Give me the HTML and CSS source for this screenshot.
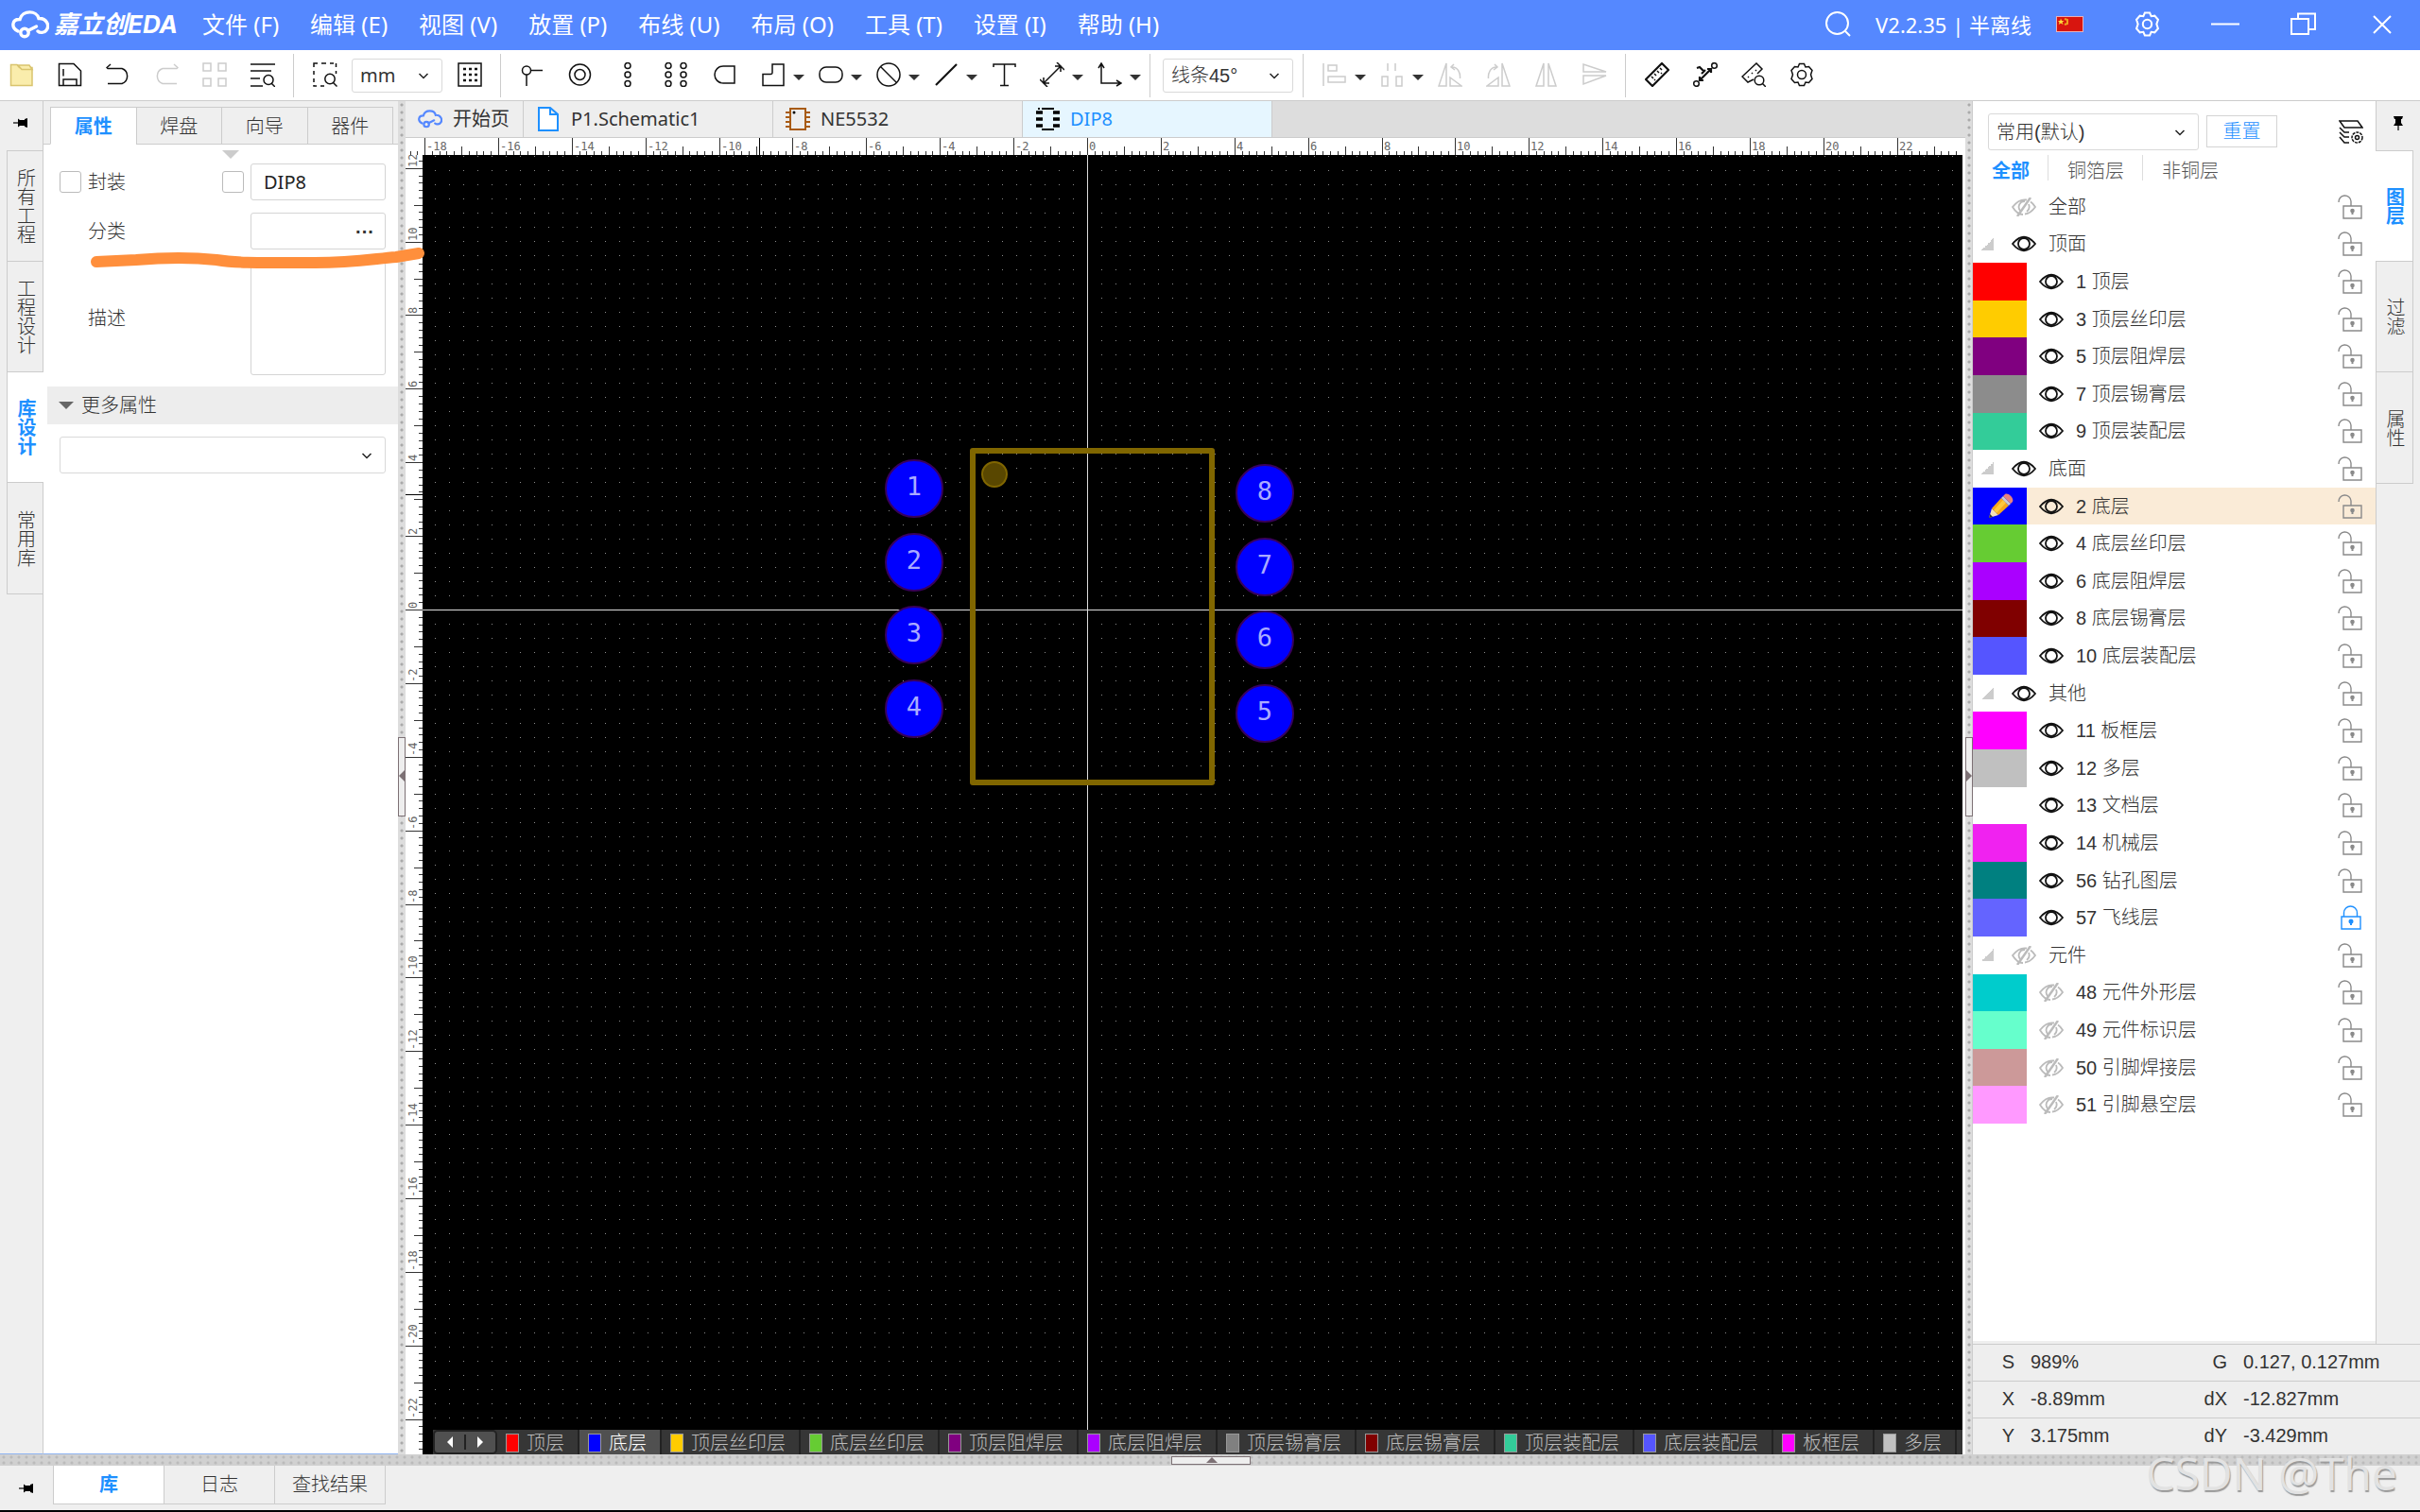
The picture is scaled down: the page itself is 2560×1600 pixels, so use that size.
FILE: index.html
```html
<!DOCTYPE html>
<html lang="zh-CN">
<head>
<meta charset="utf-8">
<title>嘉立创EDA - DIP8</title>
<link rel="stylesheet" href="styles.css">
</head>
<body>
<svg class="defs" width="0" height="0" aria-hidden="true">
  <defs>
    <symbol id="cloud" viewBox="0 0 40 30"><g fill="none" stroke="currentColor" stroke-width="3.4" stroke-linecap="round"><path d="M7 22C-1 18 1 9 9 9.500C12-1 27 0 29 8.500C37 8 41 16 37 21C35 24 30 24 28 22"/><circle cx="14" cy="23.500" r="4.200"/><path d="M17.500 21.500L26.500 17"/></g></symbol>
    <symbol id="chev" viewBox="0 0 12 12"><path d="M1.500 4L6 8.500L10.500 4" fill="none" stroke="#222" stroke-width="1.500"/></symbol>
    <symbol id="pin" viewBox="0 0 16 12"><path d="M0 6H6" stroke="#000" stroke-width="1.200"/><path d="M5 1.500L7 3H12V2L15 1V11L12 10V9H7L5 10.500Z" fill="#000"/></symbol>
    <symbol id="folder" viewBox="0 0 26 26"><path d="M1.500 2.500H8L10.500 5.500H24V24.500H1.500Z" fill="#faedac" stroke="#d9c46e" stroke-width="1.500"/><path d="M9 3H21L24 7.500H13Z" fill="#faedac" stroke="#d9c46e"/></symbol>
    <symbol id="save" viewBox="0 0 26 26"><path d="M1.500 1.500H17L24.500 9V24.500H1.500ZM6 24V18H20V24M6 7V14.500"/></symbol>
    <symbol id="undo" viewBox="0 0 26 26"><path d="M5 2L1 5.500L2 6.500H17A8.500 8.500 0 0 1 17 22.500H2"/></symbol>
    <symbol id="redo" viewBox="0 0 26 26"><path d="M21 2L25 5.500L24 6.500H9A8.500 8.500 0 0 0 9 22.500H24"/></symbol>
    <symbol id="tiles" viewBox="0 0 26 26"><path d="M1 1H9V9H1ZM17 1H25V9H17ZM1 17H9V25H1ZM17 17H25V25H17Z"/></symbol>
    <symbol id="listfind" viewBox="0 0 26 26"><path d="M0 2H26M0 9H22M0 17H10M0 25H13M22 22L26 26"/><circle cx="19" cy="18.500" r="5"/></symbol>
    <symbol id="areafind" viewBox="0 0 26 26"><path d="M1 5V1H5M9 1H14M18 1H22M24.500 1V5M24.500 9V12M1 9V13M1 17V21M1 24V25H4M8 25H12M21.500 21.500L25.500 25.500"/><circle cx="18" cy="17.500" r="5.200"/></symbol>
    <symbol id="grid" viewBox="0 0 26 26"><path d="M1 1H25V25H1Z"/><path d="M6 7H21M6 13H21M6 19H21" stroke-dasharray="3 3" stroke-width="2.500"/></symbol>
    <symbol id="pinicon" viewBox="0 0 26 26"><circle cx="7" cy="8.500" r="4.500"/><path d="M7 13V25M11.500 8.500H24"/></symbol>
    <symbol id="ring" viewBox="0 0 26 26"><circle cx="12.500" cy="13" r="11"/><circle cx="12.500" cy="13" r="5.500"/></symbol>
    <symbol id="three" viewBox="0 0 26 26"><circle cx="12" cy="3.500" r="3"/><circle cx="12" cy="13" r="3"/><circle cx="12" cy="22.500" r="3"/></symbol>
    <symbol id="six" viewBox="0 0 26 26"><circle cx="4" cy="3.500" r="3"/><circle cx="4" cy="13" r="3"/><circle cx="4" cy="22.500" r="3"/><circle cx="20" cy="3.500" r="3"/><circle cx="20" cy="13" r="3"/><circle cx="20" cy="22.500" r="3"/></symbol>
    <symbol id="dshape" viewBox="0 0 26 26"><path d="M11 4H23V22H11C6 22 2 18 2 13S6 4 11 4Z"/></symbol>
    <symbol id="lshape" viewBox="0 0 26 26"><path d="M12 2H24V24.500H2V12.500H10C12 12.500 12 12 12 10.500Z"/></symbol>
    <symbol id="oval" viewBox="0 0 26 26"><rect x="1" y="5" width="24" height="16" rx="7"/></symbol>
    <symbol id="slash" viewBox="0 0 26 26"><circle cx="13" cy="13" r="12"/><path d="M4.500 4.500L21.500 21.500"/></symbol>
    <symbol id="line" viewBox="0 0 26 26"><path d="M2 24L24 2" stroke-width="2.200"/></symbol>
    <symbol id="text" viewBox="0 0 26 26"><path d="M2 5V2H25V5M13.500 2V24.500M9 24.500H18"/></symbol>
    <symbol id="dim" viewBox="0 0 26 26"><path d="M4 22L22 4M0 18L8 26M18 0L26 8M4 16V22H10M16 4H22V10"/></symbol>
    <symbol id="axes" viewBox="0 0 26 26"><path d="M4 2V22H24M1 6L4 1L7 6M20 19L25 22L20 25"/></symbol>
    <symbol id="align" viewBox="0 0 26 26"><path d="M1 1V25M6 3H15V9H6ZM6 15H24V21H6Z"/></symbol>
    <symbol id="distr" viewBox="0 0 26 26"><path d="M8 1V9M16 1V9M2 15H8V25H2ZM17 15H23V25H17Z"/></symbol>
    <symbol id="rotl" viewBox="0 0 26 26"><path d="M9 1V25H1ZM13 16L25 25H13ZM17 2L14 5L18 8M14 5C21 4 24 11 23.500 17"/></symbol>
    <symbol id="rotr" viewBox="0 0 26 26"><path d="M17 1V25H25ZM13 16L1 25H13ZM9 2L12 5L8 8M12 5C5 4 2 11 2.500 17"/></symbol>
    <symbol id="fliph" viewBox="0 0 26 26"><path d="M10 1V25H2ZM15 1V25H23Z"/></symbol>
    <symbol id="flipv" viewBox="0 0 26 26"><path d="M1 2V10H25ZM1 23V14H25Z"/></symbol>
    <symbol id="ruler" viewBox="0 0 26 26"><path d="M18 1L25 8L8 25L1 18Z" stroke-width="2.200"/><path d="M9 17L7 15M12 14L10 12M15 11L13 9M18 8L16 6M11 19L10 18M18 12L17 11"/></symbol>
    <symbol id="measure" viewBox="0 0 26 26"><circle cx="3.500" cy="22.500" r="2.800"/><circle cx="22.500" cy="3.500" r="2.800"/><path d="M7 19L19 7M7 15V19H11M15 7H19V11M4 6L7 5L12 10M9 12L13 8" stroke-width="2.200"/></symbol>
    <symbol id="rulerfind" viewBox="0 0 26 26"><path d="M13 18L7 21L1 15L16 1L22 7L17 12M7 15L8 16M11 11L12 12M15 8L16 9M22.500 22.500L26 26"/><circle cx="19" cy="19" r="4.800"/></symbol>
    <symbol id="gear" viewBox="0 0 26 26"><circle cx="13" cy="13" r="4.500"/><path d="M10.500 1.500H15.500L17 5L20.500 4.500L24 8.500L22.500 13L24 17.500L20.500 21.500L17 21L15.500 24.500H10.500L9 21L5.500 21.500L2 17.500L3.500 13L2 8.500L5.500 4.500L9 5Z"/></symbol>
    <symbol id="eye" viewBox="0 0 26 20"><path d="M1 10Q13-4.500 25 10Q13 24.500 1 10Z"/><circle cx="13" cy="10" r="6"/></symbol>
    <symbol id="eyeoff" viewBox="0 0 26 20"><path d="M12 18C8 18 4 15 1 10Q8 1 16 2.500M20 4.500Q23 6.500 25 10Q20 17 14 17.500M10 15Q5 10 10 5Q12 4 14 4M18 7Q20 12 16 15"/><path d="M20 0L6 20" stroke-width="2.500"/></symbol>
    <symbol id="unlock" viewBox="0 0 26 26"><path d="M1 8A6.500 6.500 0 0 1 14 7V12M6 12H25V25H6Z"/><path d="M15.500 15.500V21" stroke-width="2"/><circle cx="15.500" cy="17" r="1.600" fill="currentColor"/></symbol>
    <symbol id="lock" viewBox="0 0 26 26"><path d="M6.500 12V8A7 7 0 0 1 20.500 8V12M4 12H24V25H4Z"/><path d="M14 16V21" stroke-width="2"/><circle cx="14" cy="17" r="1.800" fill="currentColor"/></symbol>
    <symbol id="layers" viewBox="0 0 26 26"><path d="M1 1H20L25 8H6ZM1 8L6 13H11M1 13L6 18H11M1 18L6 24H11"/><circle cx="19.500" cy="18.500" r="5.500" stroke-dasharray="3 1"/><circle cx="19.500" cy="18.500" r="2"/></symbol>
    <symbol id="pencil" viewBox="0 0 28 28"><path d="M2 26L5 16L12 23Z" fill="#f5dfb8"/><path d="M2 26L3.200 22L6 25Z" fill="#333"/><path d="M5 16L15 5L23 13L12 23Z" fill="#f6a81c"/><path d="M7 18L17 7L20 10L10 21Z" fill="#ffc83d"/><path d="M15 5L17 3L25 11L23 13Z" fill="#c9ced2"/><path d="M17 3L19 1C22-1 29 5 27 9L25 11Z" fill="#e8837e"/></symbol>
  </defs>
</svg>

<header class="topbar">
  <div class="brand"><svg class="brand-icon"><use href="#cloud"/></svg><span>嘉立创EDA</span></div>
  <nav class="menu">
    <button>文件 (F)</button><button>编辑 (E)</button><button>视图 (V)</button><button>放置 (P)</button><button>布线 (U)</button><button>布局 (O)</button><button>工具 (T)</button><button>设置 (I)</button><button>帮助 (H)</button>
  </nav>
  <div class="window-tools">
    <button class="w-search" aria-label="搜索"><svg viewBox="0 0 27 27"><circle cx="12.500" cy="12.500" r="11.500"/><path d="M21 21L26 26"/></svg></button>
    <span class="version">V2.2.35 | 半离线</span>
    <button class="w-flag" aria-label="语言"><svg class="flag" viewBox="0 0 29 17"><rect width="29" height="17" fill="#e8b0b8"/><rect x="1" y="1" width="27" height="15" fill="#d8150f"/><path d="M5 2.500L6 5H8.500L6.500 6.500L7.500 9L5 7.500L2.800 9L3.500 6.500L2 5H4.300Z" fill="#ffde3b"/><path d="M9 3L12 4V8L9 9" fill="none" stroke="#f0a020"/></svg></button>
    <button class="w-gear" aria-label="设置"><svg><use href="#gear"/></svg></button>
    <button class="w-min" aria-label="最小化"><svg viewBox="0 0 30 27"><path d="M0 13.500H30"/></svg></button>
    <button class="w-restore" aria-label="还原"><svg viewBox="0 0 27 27"><path d="M1 8H19V24H1ZM8 8V2.500H26V19H19"/></svg></button>
    <button class="w-close" aria-label="关闭"><svg viewBox="0 0 20 20"><path d="M1 1L19 19M19 1L1 19"/></svg></button>
  </div>
</header>

<div class="toolbar" role="toolbar" id="toolbar">
  <button aria-label="打开"><svg><use href="#folder"/></svg></button>
  <button aria-label="保存"><svg><use href="#save"/></svg></button>
  <button aria-label="撤销"><svg><use href="#undo"/></svg></button>
  <button aria-label="重做" disabled><svg><use href="#redo"/></svg></button>
  <button aria-label="阵列" disabled><svg><use href="#tiles"/></svg></button>
  <button aria-label="查找"><svg><use href="#listfind"/></svg></button>
  <i class="sep"></i>
  <button aria-label="区域查找"><svg><use href="#areafind"/></svg></button>
  <div class="combo unit"><select aria-label="单位"><option>mm</option></select><svg><use href="#chev"/></svg></div>
  <button aria-label="网格"><svg><use href="#grid"/></svg></button>
  <i class="sep"></i>
  <button aria-label="引脚"><svg><use href="#pinicon"/></svg></button>
  <button aria-label="焊盘"><svg><use href="#ring"/></svg></button>
  <button aria-label="单排焊盘"><svg><use href="#three"/></svg></button>
  <button aria-label="双排焊盘"><svg><use href="#six"/></svg></button>
  <button aria-label="异形焊盘"><svg><use href="#dshape"/></svg></button>
  <button aria-label="填充" class="drop"><svg><use href="#lshape"/></svg></button>
  <button aria-label="挖槽" class="drop"><svg><use href="#oval"/></svg></button>
  <button aria-label="禁止区域" class="drop"><svg><use href="#slash"/></svg></button>
  <button aria-label="线条" class="drop"><svg><use href="#line"/></svg></button>
  <button aria-label="文本"><svg><use href="#text"/></svg></button>
  <button aria-label="尺寸" class="drop"><svg><use href="#dim"/></svg></button>
  <button aria-label="原点" class="drop"><svg><use href="#axes"/></svg></button>
  <i class="sep"></i>
  <div class="combo angle"><select aria-label="拐角"><option>线条45°</option></select><svg><use href="#chev"/></svg></div>
  <i class="sep"></i>
  <button aria-label="对齐" class="drop faint"><svg><use href="#align"/></svg></button>
  <button aria-label="分布" class="drop faint"><svg><use href="#distr"/></svg></button>
  <button aria-label="左旋" disabled><svg><use href="#rotl"/></svg></button>
  <button aria-label="右旋" disabled><svg><use href="#rotr"/></svg></button>
  <button aria-label="水平翻转" disabled><svg><use href="#fliph"/></svg></button>
  <button aria-label="垂直翻转" disabled><svg><use href="#flipv"/></svg></button>
  <i class="sep"></i>
  <button aria-label="测量"><svg><use href="#ruler"/></svg></button>
  <button aria-label="测量间距"><svg><use href="#measure"/></svg></button>
  <button aria-label="检查尺寸"><svg><use href="#rulerfind"/></svg></button>
  <button aria-label="选项"><svg><use href="#gear"/></svg></button>
</div>

<main class="work">
  <aside class="rail rail-left">
    <button class="rail-pin" aria-label="固定"><svg><use href="#pin"/></svg></button>
    <button class="rail-tab"><span>所有工程</span></button>
    <button class="rail-tab"><span>工程设计</span></button>
    <button class="rail-tab on"><span>库设计</span></button>
    <button class="rail-tab"><span>常用库</span></button>
  </aside>
  <section class="props">
    <div class="prop-tabs"><button class="on">属性</button><button>焊盘</button><button>向导</button><button>器件</button></div>
    <form class="prop-form">
      <i class="sort-mark"></i>
      <input type="checkbox" id="c1" class="tick"><label for="c1">封装</label><input type="checkbox" class="tick" aria-label="覆盖封装"><input type="text" value="DIP8" aria-label="封装名">
      <label for="cat" class="lone">分类</label><div class="pick"><input type="text" id="cat"><button type="button" aria-label="选择分类">···</button></div>
      <label for="desc" class="lone">描述</label><textarea id="desc"></textarea>
    </form>
    <h2 class="more"><i></i>更多属性</h2>
    <div class="combo extra"><select aria-label="更多属性"><option></option></select><svg><use href="#chev"/></svg></div>
    <svg class="marker" viewBox="0 0 360 30" aria-hidden="true"><path d="M8 17L50 15C75 13 105 12 135 15C160 19 185 18 230 18C275 19 300 14 325 12L349 8" fill="none" stroke="#ff8f3c" stroke-width="12" stroke-linecap="round" stroke-linejoin="round"/></svg>
  </section>
  <div class="split"><i class="grip left"></i></div>
  <section class="editor">
    <div class="doc-tabs">
      <button class="home"><svg class="blue"><use href="#cloud"/></svg>开始页</button>
      <button><svg viewBox="0 0 26 26"><path d="M3 1H15L23 8V25H3ZM15 1V8H23" fill="#fff" stroke="#1e90ff" stroke-width="2"/></svg>P1.Schematic1</button>
      <button><svg viewBox="0 0 26 26"><path d="M0 6H4M0 11H4M0 16H4M0 21H4M22 6H26M22 11H26M22 16H26M22 21H26M5 2H21V24H5Z" fill="none" stroke="#a85b14" stroke-width="2"/><circle cx="9" cy="6" r="1.500"/></svg>NE5532</button>
      <button class="on"><svg viewBox="0 0 26 26"><path d="M1 6H8M1 13H8M1 20H8M19 6H26M19 13H26M19 20H26" stroke="#000" stroke-width="3.500"/><path d="M3 2H5M7 2H20M7 24H20" stroke="#000" stroke-width="2"/></svg>DIP8</button>
    </div>
    <svg class="ruler-x" id="rx"></svg>
    <svg class="ruler-y" id="ry"></svg>
    <div class="canvas">
      <svg class="board" id="board">
        <defs><pattern id="dots" x="703" y="481" width="15" height="15" patternUnits="userSpaceOnUse"><rect width="1" height="1" fill="#8a8a8a"/></pattern></defs>
        <rect width="100%" height="100%" fill="url(#dots)"/>
        <path d="M0 481H4000V482H0ZM703 0H704V3000H703Z" fill="#ddd"/>
        <rect x="582" y="313" width="253" height="351" fill="none" stroke="#806600" stroke-width="6" stroke-linejoin="round"/>
        <circle cx="605" cy="338" r="13" fill="#594700" stroke="#806600" stroke-width="2"/>
        <g id="pads"></g>
      </svg>
      <div class="layer-tabs" id="layerTabs">
        <div class="scroll"><button aria-label="向左"></button><i></i><button aria-label="向右"></button></div>
      </div>
    </div>
  </section>
  <div class="split split-end"><i class="grip side"></i></div>
  <div class="side-panel">
    <div class="side-top">
      <section class="layers">
        <div class="layer-head">
          <div class="combo preset"><select aria-label="配置"><option>常用(默认)</option></select><svg><use href="#chev"/></svg></div>
          <button class="reset">重置</button>
          <button class="manage" aria-label="图层管理"><svg><use href="#layers"/></svg></button>
        </div>
        <div class="filters"><button class="on">全部</button><button>铜箔层</button><button>非铜层</button></div>
        <ul class="layer-list" id="layerList"></ul>
      </section>
      <aside class="rail rail-right">
        <button class="rail-pin up" aria-label="固定"><svg viewBox="0 0 12 16"><path d="M6 10V16" stroke="#000" stroke-width="1.200"/><path d="M1 1H11L10 4H9V8L11 11H1L3 8V4H2Z"/></svg></button>
        <button class="rail-tab on"><span>图层</span></button>
        <button class="rail-tab"><span>过滤</span></button>
        <button class="rail-tab"><span>属性</span></button>
      </aside>
    </div>
    <dl class="status">
      <div><dt>S</dt><dd>989%</dd><dt>G</dt><dd>0.127, 0.127mm</dd></div>
      <div><dt>X</dt><dd>-8.89mm</dd><dt>dX</dt><dd>-12.827mm</dd></div>
      <div><dt>Y</dt><dd>3.175mm</dd><dt>dY</dt><dd>-3.429mm</dd></div>
    </dl>
  </div>
</main>

<div class="hsplit"><i class="grip bottom"></i></div>
<footer class="dock">
  <button class="dock-pin" aria-label="固定"><svg><use href="#pin"/></svg></button>
  <button class="on">库</button><button>日志</button><button>查找结果</button>
  <span class="stamp">CSDN @The</span>
</footer>
<script src="app.js"></script>
</body>
</html>
```
FILE: styles.css
```css
* { box-sizing: border-box; }
body {
  margin: 0; min-height: 100vh; display: flex; flex-direction: column;
  border-bottom: 2px solid #000; background: #efefef; color: #333;
  font: 300 20px/24px "Liberation Sans", "Noto Sans CJK SC", sans-serif;
  overflow: hidden;
}
button { font: inherit; color: inherit; background: none; border: 0; padding: 0; margin: 0; }
svg { display: block; }
.defs { position: absolute; }

.topbar { height: 53px; padding-bottom: 2px; display: flex; align-items: center; background: #5588ff; color: #fff; font: 24px/32px "Noto Sans", "Noto Sans CJK SC", sans-serif; }
.brand { width: 202px; padding-left: 12px; display: flex; align-items: center; gap: 5px; font: italic 700 26px/32px Inter, "Noto Sans CJK SC", sans-serif; white-space: nowrap; }
.brand-icon { width: 40px; height: 30px; flex: none; }
.menu { display: flex; gap: 33px; padding-left: 12px; white-space: nowrap; }
.window-tools { margin-left: auto; padding-right: 30px; display: flex; align-items: center; white-space: nowrap; }
.window-tools svg { width: 27px; height: 27px; fill: none; stroke: #fff; stroke-width: 2; }
.window-tools .version { margin: 0 26px; font-size: 22px; }
.window-tools .flag { width: 29px; height: 17px; stroke: none; }
.w-gear { margin-left: 54px; }
.w-min { margin: 0 54px; }
.window-tools .w-min svg { width: 30px; }
.w-close { margin-left: 60px; }
.window-tools .w-close svg { width: 20px; height: 20px; }

.toolbar { height: 54px; display: flex; align-items: center; background: #fff; border-bottom: 1px solid #ccc; }
.toolbar button { width: 51px; height: 52px; flex: none; padding: 0 0 2px 10px; display: flex; align-items: center; color: #111; }
.toolbar button svg { width: 26px; height: 26px; fill: none; stroke: currentColor; stroke-width: 1.5; flex: none; }
.toolbar button.drop { width: 61px; gap: 8px; }
.toolbar .drop::after { content: ""; margin-top: 6px; border: 6px solid transparent; border-top-color: #333; border-bottom: 0; }
.toolbar button:disabled, .toolbar .faint { color: #ccc; }
.sep { width: 1px; height: 46px; margin: 0 10px 0 4px; background: #ccc; flex: none; }
.combo { display: grid; align-items: center; flex: none; }
.combo select { grid-area: 1 / 1; width: 100%; height: 100%; appearance: none; padding: 0 8px; font: inherit; color: #333; background: #fff; border: 1px solid #d9d9d9; border-radius: 3px; }
.combo > svg { grid-area: 1 / 1; justify-self: end; width: 12px; height: 12px; margin-right: 14px; pointer-events: none; }
.combo.unit { width: 96px; height: 36px; margin-right: 6px; font-family: "Noto Sans", sans-serif; font-weight: 400; }
.combo.angle { width: 138px; height: 36px; margin: 0 6px 0 3px; }

.work { flex: 1; display: flex; min-height: 0; }
.rail { display: flex; flex-direction: column; background: #efefef; flex: none; }
.rail-left { width: 46px; padding-left: 7px; border-right: 1px solid #ccc; border-bottom: 1px solid #8fb4f0; }
.rail-pin { height: 52px; flex: none; display: grid; place-items: center; }
.rail-left .rail-pin svg { width: 16px; height: 12px; margin: 0 8px 6px 0; }
.rail-tab { height: 117px; flex: none; border: 1px solid #ccc; border-bottom: 0; border-right: 0; display: grid; place-items: center; }
.rail-tab:last-child { border-bottom: 1px solid #ccc; height: 119px; }
.rail-tab span { writing-mode: vertical-rl; line-height: 20px; }
.rail-tab.on { background: #fff; color: #1e90ff; font-weight: 700; }
.rail-left .on { margin-right: -1px; }
.rail-right { width: 47px; padding-right: 7px; border-left: 1px solid #ccc; }
.rail-right .rail-tab { border: 1px solid #ccc; border-bottom: 0; border-left: 0; }
.rail-right .rail-tab:last-child { border-bottom: 1px solid #ccc; }
.rail-right .on { margin-left: -1px; }
.up svg { width: 12px; height: 16px; margin: 0 0 6px 6px; }

.props { position: relative; width: 375px; flex: none; background: #fff; border-bottom: 1px solid #8fb4f0; }
.prop-tabs { display: flex; height: 46px; padding: 6px 5px 0 7px; background: #efefef; border-bottom: 1px solid #ccc; }
.prop-tabs button { flex: 1; height: 40px; padding-top: 2px; border: 1px solid #ccc; border-right: 0; }
.prop-tabs button:last-child { border-right: 1px solid #ccc; }
.prop-tabs .on { background: #fff; color: #1e90ff; font-weight: 700; border-bottom-color: #fff; }
.prop-form { display: grid; grid-template-columns: 23px 1fr 23px 143px; column-gap: 7px; row-gap: 13px; align-items: center; padding: 6px 13px 0 17px; }
.sort-mark { grid-column: 1 / -1; justify-self: center; width: 18px; margin: 0 0 -8px 17px; border: 9px solid transparent; border-top-color: #ccc; border-bottom: 0; }
.tick { appearance: none; width: 23px; height: 23px; margin: 0; border: 1px solid #bbb; border-radius: 3px; background: #fff; }
.prop-form .lone { grid-column: 2 / 4; }
.prop-form input[type="text"], .prop-form textarea { width: 143px; height: 39px; font: 20px/24px "Noto Sans", "Noto Sans CJK SC", sans-serif; color: #222; padding: 0 13px; border: 1px solid #d4d4d4; border-radius: 3px; background: #fff; }
.prop-form textarea { height: 120px; resize: none; display: block; }
.pick { display: grid; align-items: center; }
.pick > * { grid-area: 1 / 1; }
.pick button { justify-self: end; margin-right: 12px; font-weight: 700; }
.more { margin: 12px 0 13px 4px; height: 40px; padding-left: 12px; display: flex; align-items: center; gap: 8px; background: #ededed; font: inherit; }
.more i { border: 8px solid transparent; border-top-color: #666; border-bottom: 0; }
.combo.extra { height: 39px; margin: 0 13px 0 17px; }
.marker { position: absolute; left: 48px; top: 153px; width: 360px; height: 30px; overflow: visible; z-index: 3; }

.split { position: relative; width: 8px; flex: none; background: #ddd radial-gradient(circle, #aaa 1px, transparent 2px) 0 0 / 8px 8px; }
.split-end { border-right: 1px solid #ccc; }
.grip { position: absolute; border: 1px solid #7d7175; background: #eee; }
.grip.left, .grip.side { left: 0; top: 47%; width: 8px; height: 84px; }
.grip::after { content: ""; position: absolute; }
.grip.left::after { right: 0; top: 34px; border: 6px solid transparent; border-right-color: #7d7175; border-left: 0; }
.grip.side::after { left: 0; top: 34px; border: 6px solid transparent; border-left-color: #7d7175; border-right: 0; }

.editor { flex: 1; min-width: 0; display: grid; grid-template: 39px 18px 1fr / 18px 1fr; background: #fff; padding-right: 3px; }
.doc-tabs { grid-column: 1 / -1; display: flex; background: #ddd; border-bottom: 1px solid #ccc; margin-right: -3px; font: 20px/24px "Noto Sans", "Noto Sans CJK SC", sans-serif; }
.doc-tabs button { width: 264px; display: flex; align-items: center; gap: 11px; padding-left: 13px; background: #eee; border-right: 1px solid #ccc; }
.doc-tabs button.home { width: 125px; }
.doc-tabs svg { width: 26px; height: 26px; flex: none; }
.doc-tabs .blue { color: #5588ff; height: 20px; }
.doc-tabs .on { background: #e6f6ff; color: #1e90ff; }
.ruler-x { grid-column: 1 / -1; width: 100%; height: 18px; }
.ruler-y { width: 18px; height: 100%; overflow: hidden; }
.ruler-x, .ruler-y { font: 12px/12px "DejaVu Sans Mono", monospace; fill: #666; }
.canvas { background: #000; display: grid; grid-template: 1fr 26px / 1fr; min-width: 0; min-height: 0; overflow: hidden; }
.board { grid-area: 1 / 1 / 3 / 2; width: 100%; height: 100%; font: 27px/27px "DejaVu Sans Mono", monospace; fill: #aaaaff; text-anchor: middle; }
.layer-tabs { grid-area: 2 / 1; margin-left: 11px; display: flex; background: #363636; color: #bbb; overflow: hidden; }
.layer-tabs > button { flex: none; display: flex; align-items: center; gap: 8px; padding: 2px 14px 0 9px; border-right: 2px solid #222; white-space: nowrap; }
.layer-tabs > button i { width: 14px; height: 20px; border: 1px solid #999; }
.layer-tabs > .on { background: #505050; color: #fff; }
.scroll { width: 68px; flex: none; display: flex; align-items: center; justify-content: center; gap: 12px; background: #505050; border: 2px solid #222; border-radius: 5px; }
.scroll i { width: 2px; height: 16px; background: #222; }
.scroll button { border: 6px solid transparent; border-right-color: #fff; border-left: 0; }
.scroll button:last-child { border: 6px solid transparent; border-left-color: #fff; border-right: 0; }

.side-panel { width: 473px; flex: none; display: flex; flex-direction: column; }
.side-top { flex: 1; display: flex; }
.layers { flex: 1; background: #fff; border-bottom: 3px solid #eee; }
.layer-head { display: flex; align-items: center; padding: 13px 13px 0 16px; }
.combo.preset { width: 223px; height: 39px; }
.reset { width: 75px; height: 34px; margin: 0 0 2px 8px; border: 1px solid #d4d4d4; color: #1e90ff; }
.manage { margin-left: auto; }
.manage svg { width: 26px; height: 26px; fill: none; stroke: #111; stroke-width: 1.5; }
.filters { display: flex; height: 40px; padding-top: 5px; color: #555; }
.filters button { height: 27px; padding: 5px 19px 0 20px; border-left: 1px solid #ddd; }
.filters .on { color: #1e90ff; font-weight: 700; border: 0; }
.layer-list { list-style: none; margin: 0; padding: 0; height: 990px; display: grid; grid-auto-rows: 1fr; }
.layer-list li { display: flex; align-items: center; gap: 13px; padding-right: 14px; white-space: nowrap; }
.layer-list li.on { background: #faebd7; }
.swatch { width: 57px; align-self: stretch; display: grid; place-items: center; }
.swatch svg { width: 28px; height: 28px; }
.fold { width: 28px; padding-left: 9px; }
.fold::before { content: ""; display: block; width: 13px; height: 13px; background: linear-gradient(135deg, transparent 50%, #ccc 50%); }
.fold.none::before { background: none; }
.layer-list button { color: #111; }
.layer-list button svg { width: 26px; height: 20px; fill: none; stroke: currentColor; stroke-width: 1.8; }
.layer-list .hid { color: #bbb; }
.layer-list .key { margin-left: auto; color: #8a8a8a; }
.layer-list .key.shut { color: #1e90ff; }
.layer-list .key svg { height: 26px; stroke-width: 1.4; }
.status { margin: 0; background: #eee; }
.status div { height: 39px; padding-bottom: 2px; display: grid; grid-template-columns: 44px 131px 60px 1fr; column-gap: 17px; align-items: center; border-top: 1px solid #ccc; white-space: nowrap; }
.status dt { text-align: right; }
.status dd { margin: 0; }

.hsplit { position: relative; height: 12px; flex: none; background: #d0d0d0 radial-gradient(circle, #bbb 1px, transparent 2px) 0 0 / 8px 6px; }
.grip.bottom { left: 1239px; top: 2px; width: 84px; height: 9px; }
.grip.bottom::after { left: 36px; top: 0; border: 6px solid transparent; border-bottom-color: #7d7175; border-top: 0; }
.dock { position: relative; height: 47px; flex: none; display: flex; align-items: flex-start; background: #efefef; }
.dock button { width: 117px; height: 41px; border: 1px solid #ccc; border-top: 0; border-left: 0; }
.dock .dock-pin { width: 57px; border: 0; border-right: 1px solid #ccc; display: grid; place-items: center; }
.dock-pin svg { width: 16px; height: 12px; margin: 6px 0 0; }
.dock .on { background: #fff; color: #1e90ff; font-weight: 700; }
.stamp { position: absolute; right: 24px; bottom: 15px; font: 48px/48px "Open Sans", sans-serif; color: #e2e2e2; text-shadow: 1px 2px 1px #999; }
```
FILE: app.js
```js
const UNIT = 38.94;

/* Rulers: long tick every 2 mm, middle tick every 1 mm, short tick every 0.2 mm */
function ruler(el, origin, extent, vertical, cursor) {
  let out = '';
  for (let n = -150; n <= 150; n++) {
    const p = Math.round(origin + n * UNIT / 5);
    if (p < 0 || p > extent) continue;
    const len = n % 10 === 0 ? 18 : n % 5 === 0 ? 9 : 4;
    out += vertical
      ? `<rect x="${18 - len}" y="${p}" width="${len}" height="1" fill="#333"/>`
      : `<rect x="${p}" y="${18 - len}" width="1" height="${len}" fill="#333"/>`;
    if (n % 10 === 0) {
      out += vertical
        ? `<text transform="translate(12 ${p - 1}) rotate(-90)">${-n / 5 || 0}</text>`
        : `<text x="${p + 2}" y="13">${n / 5}</text>`;
    }
  }
  out += vertical
    ? `<rect x="0" y="${cursor}" width="18" height="1" fill="#000"/>`
    : `<rect x="${cursor}" y="0" width="1" height="18" fill="#000"/>`;
  el.innerHTML = out;
}
const rx = document.getElementById('rx');
const ry = document.getElementById('ry');
ruler(rx, 721, rx.getBoundingClientRect().width, false, 374);
ruler(ry, 481, ry.getBoundingClientRect().height, true, 359);

const pads = [
  [520, 353, 1], [520, 431, 2], [520, 508, 3], [520, 586, 4],
  [891, 358, 8], [891, 436, 7], [891, 513, 6], [891, 591, 5]
];
document.getElementById('pads').innerHTML = pads.map(([x, y, n]) =>
  `<circle cx="${x}" cy="${y}" r="30" fill="#0000ff" stroke="#38005c" stroke-width="2"/><text x="${x}" y="${y + 7}">${n}</text>`).join('');

const layers = [
  ['全部', null, 'off', 'none'],
  ['顶面', null],
  ['1 顶层', '#ff0000'], ['3 顶层丝印层', '#ffcc00'], ['5 顶层阻焊层', '#800080'],
  ['7 顶层锡膏层', '#8c8c8c'], ['9 顶层装配层', '#33cc99'],
  ['底面', null],
  ['2 底层', '#0000ff', 'active'], ['4 底层丝印层', '#66cc33'], ['6 底层阻焊层', '#aa00ff'],
  ['8 底层锡膏层', '#800000'], ['10 底层装配层', '#5555ff'],
  ['其他', null],
  ['11 板框层', '#ff00ff'], ['12 多层', '#c0c0c0'], ['13 文档层', '#ffffff'],
  ['14 机械层', '#f022f0'], ['56 钻孔图层', '#008080'], ['57 飞线层', '#6464ff', 'locked'],
  ['元件', null, 'off'],
  ['48 元件外形层', '#00cccc', 'off'], ['49 元件标识层', '#66ffcc', 'off'],
  ['50 引脚焊接层', '#cc9999', 'off'], ['51 引脚悬空层', '#ff99ff', 'off']
];
document.getElementById('layerList').innerHTML = layers.map(([name, color, state, fold]) => {
  const lead = color
    ? `<span class="swatch" style="background:${color}">${state === 'active' ? '<svg><use href="#pencil"/></svg>' : ''}</span>`
    : `<span class="fold ${fold || ''}"></span>`;
  const off = state === 'off';
  const shut = state === 'locked';
  return `<li class="${state === 'active' ? 'on' : ''}">${lead}
    <button class="${off ? 'hid' : ''}" aria-label="显示"><svg><use href="#${off ? 'eyeoff' : 'eye'}"/></svg></button>
    <span>${name}</span>
    <button class="key ${shut ? 'shut' : ''}" aria-label="锁定"><svg><use href="#${shut ? 'lock' : 'unlock'}"/></svg></button></li>`;
}).join('');

const tabs = [
  ['顶层', '#ff0000'], ['底层', '#0000ff'], ['顶层丝印层', '#ffcc00'], ['底层丝印层', '#66cc33'],
  ['顶层阻焊层', '#800080'], ['底层阻焊层', '#aa00ff'], ['顶层锡膏层', '#808080'], ['底层锡膏层', '#800000'],
  ['顶层装配层', '#33cc99'], ['底层装配层', '#5555ff'], ['板框层', '#ff00ff'], ['多层', '#c0c0c0']
];
document.getElementById('layerTabs').insertAdjacentHTML('beforeend', tabs.map(([name, color], i) =>
  `<button class="${i === 1 ? 'on' : ''}"><i style="background:${color}"></i>${name}</button>`).join(''));
```
